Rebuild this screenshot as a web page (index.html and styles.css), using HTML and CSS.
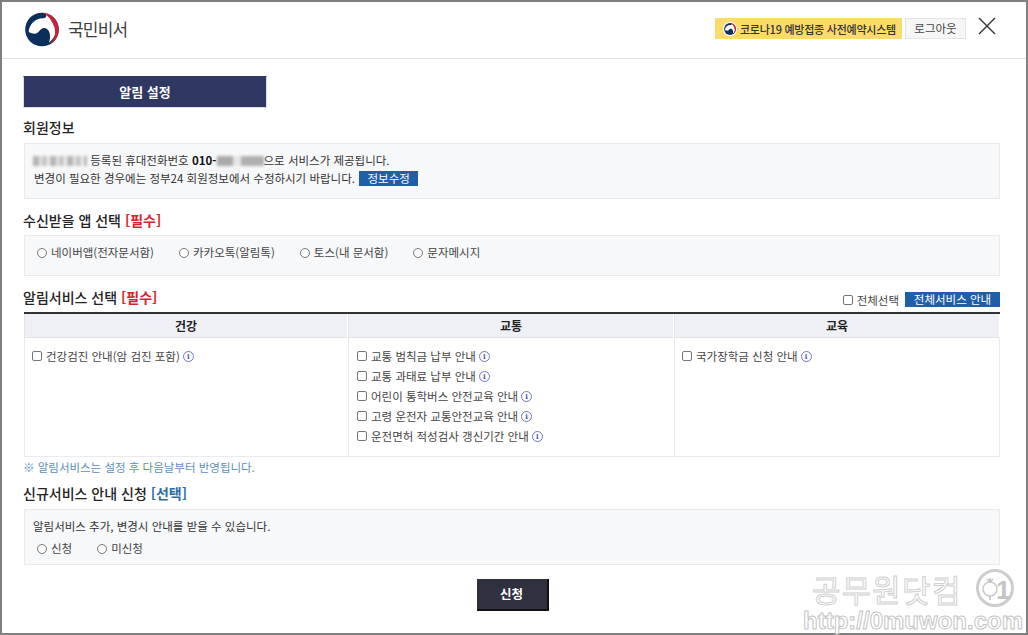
FILE: index.html
```html
<!DOCTYPE html>
<html lang="ko">
<head>
<meta charset="utf-8">
<title>국민비서 알림 설정</title>
<link rel="stylesheet" href="styles.css">
</head>
<body>
<div class="frame">
  <header class="header">
    <div class="brand">
      <svg class="logo" viewBox="0 0 100 100" aria-hidden="true">
        <circle cx="50" cy="50" r="48" fill="#0b2f5b"/>
        <path d="M12 56C14 34 32 18 52 18C60 18 66 14 60 3C80 14 92 36 90 56C88 68 80 80 70 88C78 66 70 46 56 46C44 46 42 62 30 62C22 62 14 60 12 56Z" fill="#fff"/>
        <path d="M52 2C78 4 98 26 98 50C98 68 88 84 72 92C86 78 90 62 86 46C80 26 68 10 52 2Z" fill="#c8203a"/>
      </svg>
      <span class="brand-name">국민비서</span>
    </div>
    <div class="header-actions">
      <a class="covid-link">
        <svg class="covid-logo" viewBox="0 0 100 100" aria-hidden="true">
          <circle cx="50" cy="50" r="50" fill="#fff"/>
          <circle cx="50" cy="50" r="42" fill="#0b2f5b"/>
          <path d="M14 56C16 36 32 22 52 22C60 22 64 18 60 9C78 18 88 36 86 56C84 66 78 76 70 82C76 64 68 48 56 48C44 48 42 62 30 62C22 62 16 60 14 56Z" fill="#fff"/>
          <path d="M52 8C74 10 92 28 92 50C92 66 84 78 72 86C84 74 86 60 82 46C78 30 68 16 52 8Z" fill="#c8203a"/>
        </svg>
        코로나19 예방접종 사전예약시스템
      </a>
      <a class="logout">로그아웃</a>
      <svg class="close" viewBox="0 0 18 18" aria-hidden="true">
        <path d="M1 1L17 17M17 1L1 17" stroke="#333" stroke-width="1.4" fill="none"/>
      </svg>
    </div>
  </header>

  <main class="content">
    <h1 class="page-title">알림 설정</h1>

    <h2 class="section-title first">회원정보</h2>
    <div class="panel panel-member">
      <p class="line"><span class="blur blur-name"></span> 등록된 휴대전화번호 <b>010-</b><span class="blur blur-phone"></span>으로 서비스가 제공됩니다.</p>
      <p class="line">변경이 필요한 경우에는 정부24 회원정보에서 수정하시기 바랍니다. <a class="btn-blue btn-info">정보수정</a></p>
    </div>

    <h2 class="section-title">수신받을 앱 선택 <span class="req">[필수]</span></h2>
    <div class="panel panel-apps">
      <label class="opt"><input type="radio" name="app">네이버앱(전자문서함)</label>
      <label class="opt"><input type="radio" name="app">카카오톡(알림톡)</label>
      <label class="opt"><input type="radio" name="app">토스(내 문서함)</label>
      <label class="opt"><input type="radio" name="app">문자메시지</label>
    </div>

    <div class="service-head">
      <h2 class="section-title flush">알림서비스 선택 <span class="req">[필수]</span></h2>
      <div class="service-tools">
        <label class="check-all"><input type="checkbox">전체선택</label>
        <a class="btn-blue btn-all">전체서비스 안내</a>
      </div>
    </div>

    <div class="service-table">
      <div class="th">건강</div>
      <div class="th">교통</div>
      <div class="th">교육</div>
      <div class="td">
        <label class="svc"><input type="checkbox">건강검진 안내(암 검진 포함)<i class="info">i</i></label>
      </div>
      <div class="td td-wide">
        <label class="svc"><input type="checkbox">교통 범칙금 납부 안내<i class="info">i</i></label>
        <label class="svc"><input type="checkbox">교통 과태료 납부 안내<i class="info">i</i></label>
        <label class="svc"><input type="checkbox">어린이 통학버스 안전교육 안내<i class="info">i</i></label>
        <label class="svc"><input type="checkbox">고령 운전자 교통안전교육 안내<i class="info">i</i></label>
        <label class="svc"><input type="checkbox">운전면허 적성검사 갱신기간 안내<i class="info">i</i></label>
      </div>
      <div class="td">
        <label class="svc"><input type="checkbox">국가장학금 신청 안내<i class="info">i</i></label>
      </div>
    </div>
    <p class="note">※ 알림서비스는 설정 후 다음날부터 반영됩니다.</p>

    <h2 class="section-title new-title">신규서비스 안내 신청 <span class="opt-tag">[선택]</span></h2>
    <div class="panel panel-new">
      <p class="line">알림서비스 추가, 변경시 안내를 받을 수 있습니다.</p>
      <div class="new-opts">
        <label class="opt"><input type="radio" name="new">신청</label>
        <label class="opt"><input type="radio" name="new">미신청</label>
      </div>
    </div>

    <div class="submit-row"><a class="submit">신청</a></div>
  </main>

  <div class="watermark">
    <div class="wm-top">공무원닷컴
      <svg class="wm-icon" viewBox="0 0 38 38" aria-hidden="true">
        <circle cx="19" cy="19" r="17.5" fill="#fff" stroke="#cdcdcd" stroke-width="3"/>
        <circle cx="14" cy="20" r="7" fill="#fff" stroke="#c8c8c8" stroke-width="1.5"/>
        <path d="M14 13V9M11 10L14 13L17 10M14 27V31" fill="none" stroke="#c0c0c0" stroke-width="1.5"/>
        <text class="wm-one" x="20" y="30">1</text>
      </svg>
    </div>
    <div class="wm-url">http://0muwon.com</div>
  </div>
</div>
</body>
</html>
```

FILE: styles.css
```css
* { box-sizing: border-box; }
html, body { margin: 0; padding: 0; }
body {
  width: 1028px;
  height: 635px;
  overflow: hidden;
  background: #fff;
  font-family: "Noto Sans CJK KR", "Noto Sans", sans-serif;
  font-size: 11.5px;
  color: #333;
}
a { text-decoration: none; }
p { margin: 0; }

.frame {
  position: relative;
  width: 1028px;
  height: 635px;
  border: 2px solid #808080;
}

.header {
  height: 57px;
  border-bottom: 1px solid #dedede;
  display: flex;
  justify-content: space-between;
  align-items: flex-start;
  padding: 9px 30px 0 22px;
}
.brand { display: flex; align-items: center; gap: 8px; }
.logo { width: 36px; height: 35px; }
.brand-name { font-size: 17px; line-height: 36px; letter-spacing: -0.8px; color: #3c3c3c; }
.header-actions { display: flex; align-items: flex-start; padding-top: 7px; }
.covid-link {
  display: flex;
  align-items: center;
  gap: 3px;
  width: 187px;
  height: 21px;
  padding-left: 8px;
  background: #fbdc6a;
  font-size: 11px;
  font-weight: 500;
  letter-spacing: -0.25px;
  color: #333;
  white-space: nowrap;
}
.covid-logo { width: 14px; height: 14px; flex: none; }
.logout {
  width: 61px;
  height: 21px;
  margin-left: 3px;
  background: #f6f6f6;
  border: 1px solid #e4e4e4;
  text-align: center;
  line-height: 19px;
  font-size: 11.5px;
  color: #444;
}
.close { width: 18px; height: 18px; margin-left: 12px; margin-top: -1px; }

.content { padding: 17px 26px 0 21px; }
.page-title {
  width: 244px;
  height: 32px;
  margin: 0;
  background: #2f3763;
  border: 1px solid #d9dcea;
  border-top-color: #2f3763;
  color: #fff;
  font-size: 13px;
  font-weight: 700;
  text-align: center;
  line-height: 30px;
}
.section-title {
  margin: 11px 0 5px;
  font-size: 14px;
  font-weight: 500;
  line-height: 20px;
  color: #222;
}
.section-title.first { margin-top: 9px; margin-bottom: 6px; }
.section-title.flush { margin: 0; }
.req { color: #d8232a; font-weight: 700; }
.opt-tag { color: #2e6da8; font-weight: 700; }

.panel {
  margin-left: 1px;
  background: #f7f8fa;
  border: 1px solid #e8eaed;
}
.panel-member { height: 56px; padding: 7px 9px 0; }
.line { font-size: 11.5px; line-height: 18px; color: #333; white-space: nowrap; }
.line b { color: #111; }
.blur {
  display: inline-block;
  height: 10px;
  vertical-align: -1px;
  filter: blur(1.5px);
  background: repeating-linear-gradient(90deg, #b4b4b4 0 6px, #e3e3e3 6px 9px, #c4c4c4 9px 14px, #f0f0f0 14px 17px);
}
.blur-name { width: 54px; margin-left: -1px; }
.blur-phone { width: 47px; background: repeating-linear-gradient(90deg, #aaa 0 16px, #e6e6e6 16px 24px, #b0b0b0 24px 47px); }
.btn-blue {
  display: inline-block;
  background: #1f5ea8;
  color: #fff;
  text-align: center;
}
.btn-info {
  width: 59px;
  height: 15px;
  line-height: 15px;
  margin-left: 1px;
  font-size: 11.5px;
  vertical-align: top;
  margin-top: 2px;
}

.panel-apps {
  height: 41px;
  padding: 7px 0 0 12px;
  display: flex;
  gap: 25px;
}
.opt {
  display: inline-flex;
  align-items: flex-start;
  font-size: 11.5px;
  line-height: 18px;
  color: #444;
  white-space: nowrap;
}
.opt input {
  appearance: none;
  width: 10px;
  height: 10px;
  margin: 5px 4px 0 0;
  border: 1px solid #767676;
  border-radius: 50%;
  background: #fff;
}

.service-head {
  display: flex;
  justify-content: space-between;
  align-items: flex-start;
  margin-top: 11px;
  height: 25px;
}
.service-tools { display: flex; align-items: flex-start; padding-top: 5px; }
.check-all {
  display: inline-flex;
  align-items: center;
  height: 15px;
  font-size: 11.5px;
  color: #444;
}
input[type="checkbox"] {
  appearance: none;
  width: 10px;
  height: 10px;
  margin: 0 4px 0 0;
  border: 1px solid #767676;
  border-radius: 2px;
  background: #fff;
  flex: none;
}
.btn-all {
  width: 95px;
  height: 15px;
  line-height: 15px;
  margin-left: 6px;
  font-size: 11.5px;
}

.service-table {
  margin-left: 1px;
  display: grid;
  grid-template-columns: 324px 326px 326px;
  width: 976px;
  border-top: 2px solid #333;
}
.th {
  height: 24px;
  background: #eef0f5;
  border-bottom: 1px solid #e2e4e8;
  border-left: 1px solid #e2e4e8;
  border-right: 1px solid #fff;
  text-align: center;
  font-size: 12px;
  font-weight: 700;
  line-height: 24px;
  color: #222;
}
.td {
  height: 119px;
  padding: 8px 0 0 7px;
  border-left: 1px solid #e8eaed;
  border-bottom: 1px solid #e8eaed;
}
.td-wide { padding-left: 8px; }
.td:last-child { border-right: 1px solid #e8eaed; }
.svc {
  display: flex;
  align-items: center;
  height: 20px;
  font-size: 11.5px;
  color: #444;
  white-space: nowrap;
}
.info {
  width: 11px;
  height: 11px;
  margin-left: 3px;
  border: 1px solid #6f78c4;
  border-radius: 50%;
  color: #4a53a8;
  font-family: "DejaVu Serif", serif;
  font-size: 7px;
  font-weight: 700;
  font-style: normal;
  line-height: 9px;
  text-align: center;
}
.note {
  margin-top: 2px;
  font-size: 11.5px;
  line-height: 16px;
  color: #5a8fc0;
  white-space: nowrap;
}
.new-title { margin-top: 8px; margin-bottom: 6px; }
.panel-new { height: 56px; padding: 7px 8px 0; }
.new-opts { display: flex; gap: 25px; padding: 4px 0 0 4px; }

.submit-row { display: flex; justify-content: center; margin-top: 14px; padding-left: 2px; }
.submit {
  width: 72px;
  height: 32px;
  background: #30313f;
  border-right: 2px solid #111;
  border-bottom: 2px solid #111;
  color: #fff;
  text-align: center;
  font-size: 12.5px;
  font-weight: 700;
  line-height: 30px;
}

.watermark {
  position: absolute;
  right: 3px;
  bottom: -1px;
  width: 222px;
}
.wm-top {
  display: flex;
  justify-content: flex-end;
  align-items: center;
  gap: 14px;
  height: 40px;
  padding-right: 9px;
  font-size: 31px;
  letter-spacing: 1.5px;
  color: #fff;
  -webkit-text-stroke: 1px #cfcfcf;
  white-space: nowrap;
}
.wm-icon { width: 38px; height: 38px; flex: none; }
.wm-one {
  font-family: "Liberation Sans", sans-serif;
  font-size: 26px;
  font-weight: 700;
  fill: #c4c4c4;
  stroke: none;
}
.wm-url {
  font-family: "Liberation Sans", sans-serif;
  font-size: 24px;
  font-weight: 700;
  line-height: 26px;
  color: #fff;
  -webkit-text-stroke: 1px #c4c4c4;
  white-space: nowrap;
  text-align: right;
}
```
